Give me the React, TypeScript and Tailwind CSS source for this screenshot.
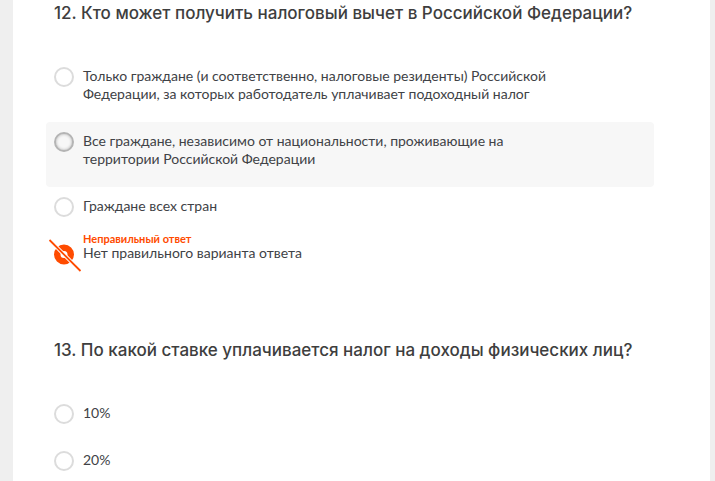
import { clsx } from "clsx";

type Option = {
	id: string;
	text: string;
	state?: "hover" | "wrong";
};

type Question = {
	id: string;
	title: string;
	options: Option[];
};

const QUESTIONS: Question[] = [
	{
		id: "q12",
		title: "12. Кто может получить налоговый вычет в Российской Федерации?",
		options: [
			{
				id: "q12-residents",
				text: "Только граждане (и соответственно, налоговые резиденты) Российской Федерации, за которых работодатель уплачивает подоходный налог",
			},
			{
				id: "q12-all",
				text: "Все граждане, независимо от национальности, проживающие на территории Российской Федерации",
				state: "hover",
			},
			{ id: "q12-countries", text: "Граждане всех стран" },
			{
				id: "q12-none",
				text: "Нет правильного варианта ответа",
				state: "wrong",
			},
		],
	},
	{
		id: "q13",
		title: "13. По какой ставке уплачивается налог на доходы физических лиц?",
		options: [
			{ id: "q13-10", text: "10%" },
			{ id: "q13-20", text: "20%" },
		],
	},
];

// crossed out dot, drawn over the radio of a wrong answer
const WrongMark = () => (
	<svg
		className="pointer-events-none absolute -top-1.5 -left-1.5 size-9"
		viewBox="0 0 36 36"
		fill="none"
		aria-hidden="true"
	>
		<circle cx="16" cy="16.5" r="6.75" stroke="#ff4b00" strokeWidth="6.5" />
		<path d="M1.5 2L32.5 33" stroke="#fff" strokeWidth="3.8" />
		<path d="M1.5 2L32.5 33" stroke="#ff4b00" strokeWidth="1.8" />
	</svg>
);

const OptionRow = ({ option, name }: { option: Option; name: string }) => {
	const isWrong = option.state === "wrong";
	const isHover = option.state === "hover";

	return (
		<div
			className={clsx(
				"flex gap-[9px] rounded-sm pr-18 pl-2",
				isHover && "bg-[#f7f7f7]",
			)}
		>
			<span className="relative mt-2.5 size-5 shrink-0">
				<input
					type="radio"
					id={option.id}
					name={name}
					defaultChecked={isWrong}
					className={clsx(
						"block size-5 appearance-none rounded-full border-2",
						isHover
							? "border-[#b4b4b4] bg-[#f7f7f7] shadow-[inset_0_0_3px_#b4b4b4]"
							: "border-[#dcdcdc] bg-white",
						isWrong && "opacity-0",
					)}
				/>
				{isWrong && <WrongMark />}
			</span>
			<label
				htmlFor={option.id}
				className={clsx(
					"pb-[19px] text-sm leading-[18px]",
					!isWrong && "pt-2.5",
				)}
			>
				{isWrong && (
					<span className="block text-[11px] leading-[10px] font-bold text-[#ff4b00]">
						Неправильный ответ
					</span>
				)}
				{option.text}
			</label>
		</div>
	);
};

function App() {
	return (
		<div className="min-h-screen bg-[#efefef] pr-[5px] pl-[13px] font-['Lato',sans-serif] text-[#404246]">
			<main className="flex min-h-screen flex-col gap-[57px] bg-white pt-px pr-14 pl-[33px]">
				{QUESTIONS.map((question) => (
					<fieldset key={question.id}>
						<legend className="mb-8 pl-2 font-['Inter',sans-serif] text-[17px] leading-6 font-medium whitespace-nowrap text-[#3e3e3e]">
							{question.title}
						</legend>
						{question.options.map((option) => (
							<OptionRow key={option.id} option={option} name={question.id} />
						))}
					</fieldset>
				))}
			</main>
		</div>
	);
}

export default App;
